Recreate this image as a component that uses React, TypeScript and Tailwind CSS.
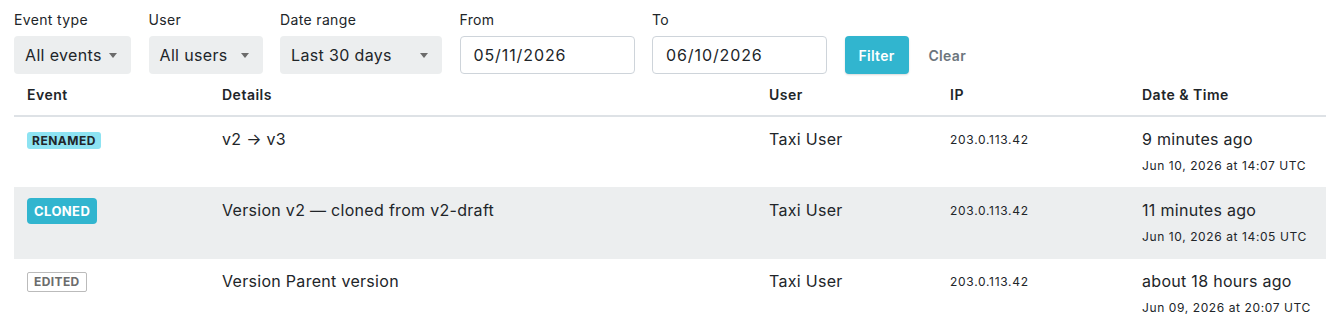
import { ReactNode } from 'react'

type Row = {
  kind: 'renamed' | 'cloned' | 'edited'
  details: string
  user: string
  ip: string
  ago: string
  stamp: string
}

const rows: Row[] = [
  { kind: 'renamed', details: 'v2 → v3', user: 'Taxi User', ip: '203.0.113.42', ago: '9 minutes ago', stamp: 'Jun 10, 2026 at 14:07 UTC' },
  { kind: 'cloned', details: 'Version v2 — cloned from v2-draft', user: 'Taxi User', ip: '203.0.113.42', ago: '11 minutes ago', stamp: 'Jun 10, 2026 at 14:05 UTC' },
  { kind: 'edited', details: 'Version Parent version', user: 'Taxi User', ip: '203.0.113.42', ago: 'about 18 hours ago', stamp: 'Jun 09, 2026 at 20:07 UTC' },
]

function Field({ label, children }: { label: string; children: ReactNode }) {
  return (
    <div className="flex flex-col">
      <label className="mb-[7px] h-[18px] text-[14px] leading-[18px] tracking-[0.35px] text-[#212529]">{label}</label>
      {children}
    </div>
  )
}

function Select({ value, width }: { value: string; width: string }) {
  return (
    <div className={`flex h-[38px] items-center justify-between whitespace-nowrap rounded-[4px] bg-[#eceeef] pl-[11px] pr-[14px] text-[16px] tracking-[0.35px] text-[#212529] ${width}`}>
      <span>{value}</span>
      <span className="ml-[5px] h-0 w-0 shrink-0 border-x-[4.5px] border-t-[5px] border-x-transparent border-t-[#6b6b6b]" />
    </div>
  )
}

function DateInput({ value }: { value: string }) {
  return (
    <div className="flex h-[38px] w-[175px] items-center rounded-[4px] border border-[#ced4da] bg-white px-[13px] text-[16px] tracking-[0.9px] text-[#212529]">
      {value}
    </div>
  )
}

function Badge({ kind }: { kind: Row['kind'] }) {
  if (kind === 'renamed')
    return (
      <span className="inline-block rounded-[3px] bg-[#8de3f2] px-[5px] py-[1px] text-[12px] font-bold leading-[15px] tracking-[0.5px] text-[#212529]">
        RENAMED
      </span>
    )
  if (kind === 'cloned')
    return (
      <span className="inline-block rounded-[4px] bg-[#31b5cf] px-[7px] py-[5px] text-[13px] font-bold leading-[16px] tracking-[0.4px] text-white">
        CLONED
      </span>
    )
  return (
    <span className="inline-block rounded-[2px] border border-[#bbb] bg-white px-[6px] py-[1px] text-[12px] font-bold leading-[16px] tracking-[0.4px] text-[#6c6c6c]">
      EDITED
    </span>
  )
}

export default function App() {
  return (
    <div className="h-[329px] w-[1326px] overflow-hidden bg-white pl-[14px] font-['Inter','Liberation_Sans',sans-serif] text-[#212529]">
      <div className="flex items-end gap-[17.5px] pt-[11px]">
        <Field label="Event type">
          <Select value="All events" width="w-[117px]" />
        </Field>
        <Field label="User">
          <Select value="All users" width="w-[114px]" />
        </Field>
        <Field label="Date range">
          <Select value="Last 30 days" width="w-[162px]" />
        </Field>
        <Field label="From">
          <DateInput value="05/11/2026" />
        </Field>
        <Field label="To">
          <DateInput value="06/10/2026" />
        </Field>
        <button className="h-[38px] w-[64px] rounded-[4px] bg-[#31b5cf] text-[14px] font-semibold tracking-[0.3px] text-white shadow-[0_1px_2px_rgba(0,0,0,0.15)]">
          Filter
        </button>
        <button className="h-[38px] px-[2.5px] text-[14px] font-semibold tracking-[0.3px] text-[#6c757d]">Clear</button>
      </div>

      <table className="w-[1312px] table-fixed border-collapse">
        <colgroup>
          <col className="w-[195px]" />
          <col className="w-[547px]" />
          <col className="w-[181px]" />
          <col className="w-[192px]" />
          <col className="w-[197px]" />
        </colgroup>
        <thead>
          <tr className="border-b-2 border-[#dee2e6] text-left text-[14px] tracking-[0.5px]">
            <th className="h-[42px] px-[13px] pb-[1px] font-semibold">Event</th>
            <th className="px-[13px] font-semibold">Details</th>
            <th className="px-[13px] font-semibold">User</th>
            <th className="px-[13px] font-semibold">IP</th>
            <th className="px-[13px] font-semibold">Date &amp; Time</th>
          </tr>
        </thead>
        <tbody>
          {rows.map((r, i) => (
            <tr key={i} className={`h-[71px] border-b border-[#eceeef] align-top ${i === 1 ? 'bg-[#eceeef]' : ''}`}>
              <td className="px-[13px] pt-[11px]">
                <div className="flex h-[25px] items-center">
                  <Badge kind={r.kind} />
                </div>
              </td>
              <td className="px-[13px] pt-[11px] text-[16px] leading-[22px] tracking-[0.3px]">{r.details}</td>
              <td className="px-[13px] pt-[11px] text-[16px] leading-[22px] tracking-[0.3px]">{r.user}</td>
              <td className="px-[13px] pt-[13px] text-[12px] leading-[20px] tracking-[0.7px]">{r.ip}</td>
              <td className="px-[13px] pt-[11px]">
                <div className="text-[16px] leading-[22px] tracking-[0.3px]">{r.ago}</div>
                <div className="mt-[8px] text-[12px] leading-[16px] tracking-[0.6px]">{r.stamp}</div>
              </td>
            </tr>
          ))}
        </tbody>
      </table>
    </div>
  )
}
